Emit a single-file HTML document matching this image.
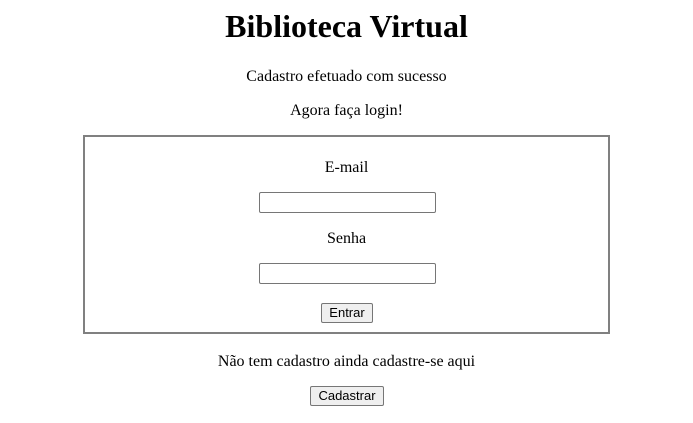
<!DOCTYPE html>
<html><head><meta charset="utf-8"><style>
body{margin:0;width:693px;height:423px;background:#fff;font-family:"Liberation Serif",serif;color:#000;position:relative;overflow:hidden}
.c{position:absolute;left:0;width:693px;text-align:center;font-size:16px;line-height:20px}
h1{position:absolute;left:0;width:693px;text-align:center;margin:0;font-size:32px;line-height:37px;top:8px;font-weight:bold}
.box{position:absolute;left:83px;top:135px;width:523px;height:195px;border:2px solid #808080}
.inp{position:absolute;left:259px;width:175px;height:19px;border:1px solid #767676;border-radius:2px;background:#fff}
.btn{position:absolute;height:18px;border:1px solid #767676;border-radius:2px;background:#efefef;font-family:"Liberation Sans",sans-serif;font-size:13px;line-height:18px;text-align:center}
</style></head><body>
<h1>Biblioteca Virtual</h1>
<div class="c" style="top:67px">Cadastro efetuado com sucesso</div>
<div class="c" style="top:101px">Agora faça login!</div>
<div class="box"></div>
<div class="c" style="top:158px">E-mail</div>
<div class="inp" style="top:192px"></div>
<div class="c" style="top:229px">Senha</div>
<div class="inp" style="top:263px"></div>
<div class="btn" style="left:321px;top:303px;width:50px">Entrar</div>
<div class="c" style="top:352px">Não tem cadastro ainda cadastre-se aqui</div>
<div class="btn" style="left:310px;top:386px;width:72px">Cadastrar</div>
</body></html>
